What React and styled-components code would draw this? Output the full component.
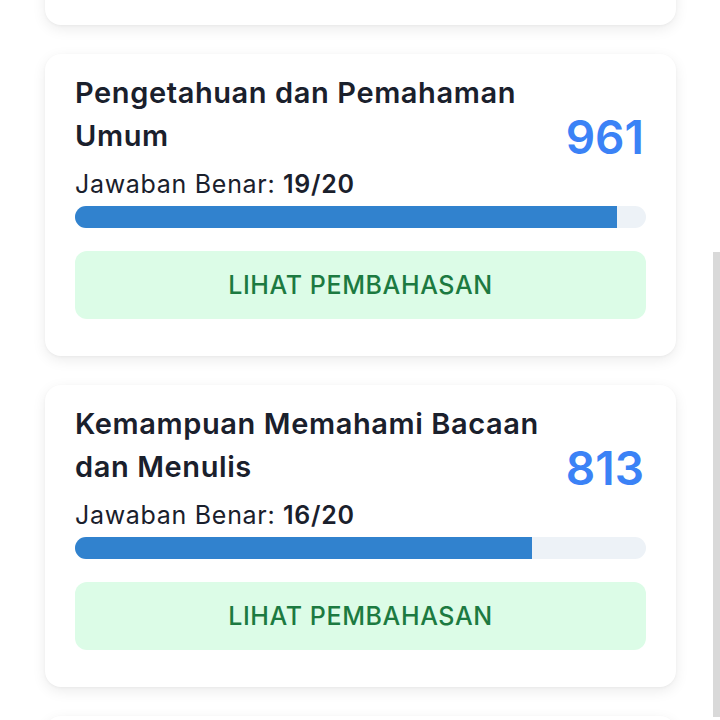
import React from "react";
import styled, { createGlobalStyle } from "styled-components";

const results = [
  { id: 1, title: "Penalaran Umum", score: 874, correct: 17, total: 20 },
  { id: 2, title: "Pengetahuan dan Pemahaman Umum", score: 961, correct: 19, total: 20 },
  { id: 3, title: "Kemampuan Memahami Bacaan dan Menulis", score: 813, correct: 16, total: 20 },
  { id: 4, title: "Pengetahuan Kuantitatif", score: 790, correct: 15, total: 20 },
];

const App = () => {
  return (
    <>
      <GlobalStyle />
      <StPage>
        <StList>
          {results.map((item) => (
            <StCard key={item.id}>
              <StHeader>
                <StInfo>
                  <StTitle>{item.title}</StTitle>
                  <StCorrect>
                    Jawaban Benar:{" "}
                    <b>
                      {item.correct}/{item.total}
                    </b>
                  </StCorrect>
                </StInfo>
                <StScore>{item.score}</StScore>
              </StHeader>
              <StTrack>
                <StFill style={{ width: `${(item.correct / item.total) * 100}%` }} />
              </StTrack>
              <StButton>LIHAT PEMBAHASAN</StButton>
            </StCard>
          ))}
        </StList>
        <StScrollThumb />
      </StPage>
    </>
  );
};

export default App;

const GlobalStyle = createGlobalStyle`
  html, body {
    margin: 0;
    padding: 0;
    background: #ffffff;
    overflow: hidden;
  }
  body {
    font-family: Inter, "Noto Sans", sans-serif;
    color: #1a202c;
  }
`;

const StPage = styled.div`
  height: 720px;
  overflow: hidden;
`;

// the first card is partly scrolled out of view
const StList = styled.div`
  display: flex;
  flex-direction: column;
  gap: 29px;
  margin: -277px 0 0 0;
  padding: 0 44px 0 45px;
`;

const StCard = styled.div`
  background: #ffffff;
  border-radius: 16px;
  box-shadow: 0 4px 14px rgba(0, 0, 0, 0.08), 0 1px 3px rgba(0, 0, 0, 0.04);

  height: 302px;
  box-sizing: border-box;
  padding: 17px 30px 0 30px;

  display: flex;
  flex-direction: column;
`;

const StHeader = styled.div`
  display: flex;
  align-items: center;
  justify-content: space-between;
  gap: 16px;
`;

const StInfo = styled.div`
  flex: 1;
  display: flex;
  flex-direction: column;
  gap: 9px;
`;

const StTitle = styled.div`
  font-size: 29px;
  font-weight: 600;
  line-height: 43px;
  letter-spacing: 0.6px;
  color: #1a202c;
`;

const StCorrect = styled.div`
  font-size: 25px;
  font-weight: 400;
  line-height: 36px;
  letter-spacing: 0.7px;
  color: #1a202c;

  b {
    font-weight: 600;
  }
`;

const StScore = styled.div`
  font-size: 46px;
  font-weight: 600;
  line-height: 54px;
  color: #3b82f6;
  margin-right: 2px;
`;

const StTrack = styled.div`
  margin-top: 4px;
  height: 22px;
  border-radius: 11px;
  background: #edf2f7;
  overflow: hidden;
`;

const StFill = styled.div`
  height: 100%;
  background: #3182ce;
`;

const StButton = styled.button`
  margin-top: 23px;
  height: 68px;
  width: 100%;

  border: none;
  border-radius: 12px;
  background: #dcfce7;

  font-family: Inter, "Noto Sans", sans-serif;
  font-size: 25px;
  font-weight: 500;
  letter-spacing: 0.6px;
  color: #1c7a41;
`;

const StScrollThumb = styled.div`
  position: fixed;
  right: 0;
  top: 252px;
  width: 7px;
  height: 465px;
  background: #d9d9d9;
`;
